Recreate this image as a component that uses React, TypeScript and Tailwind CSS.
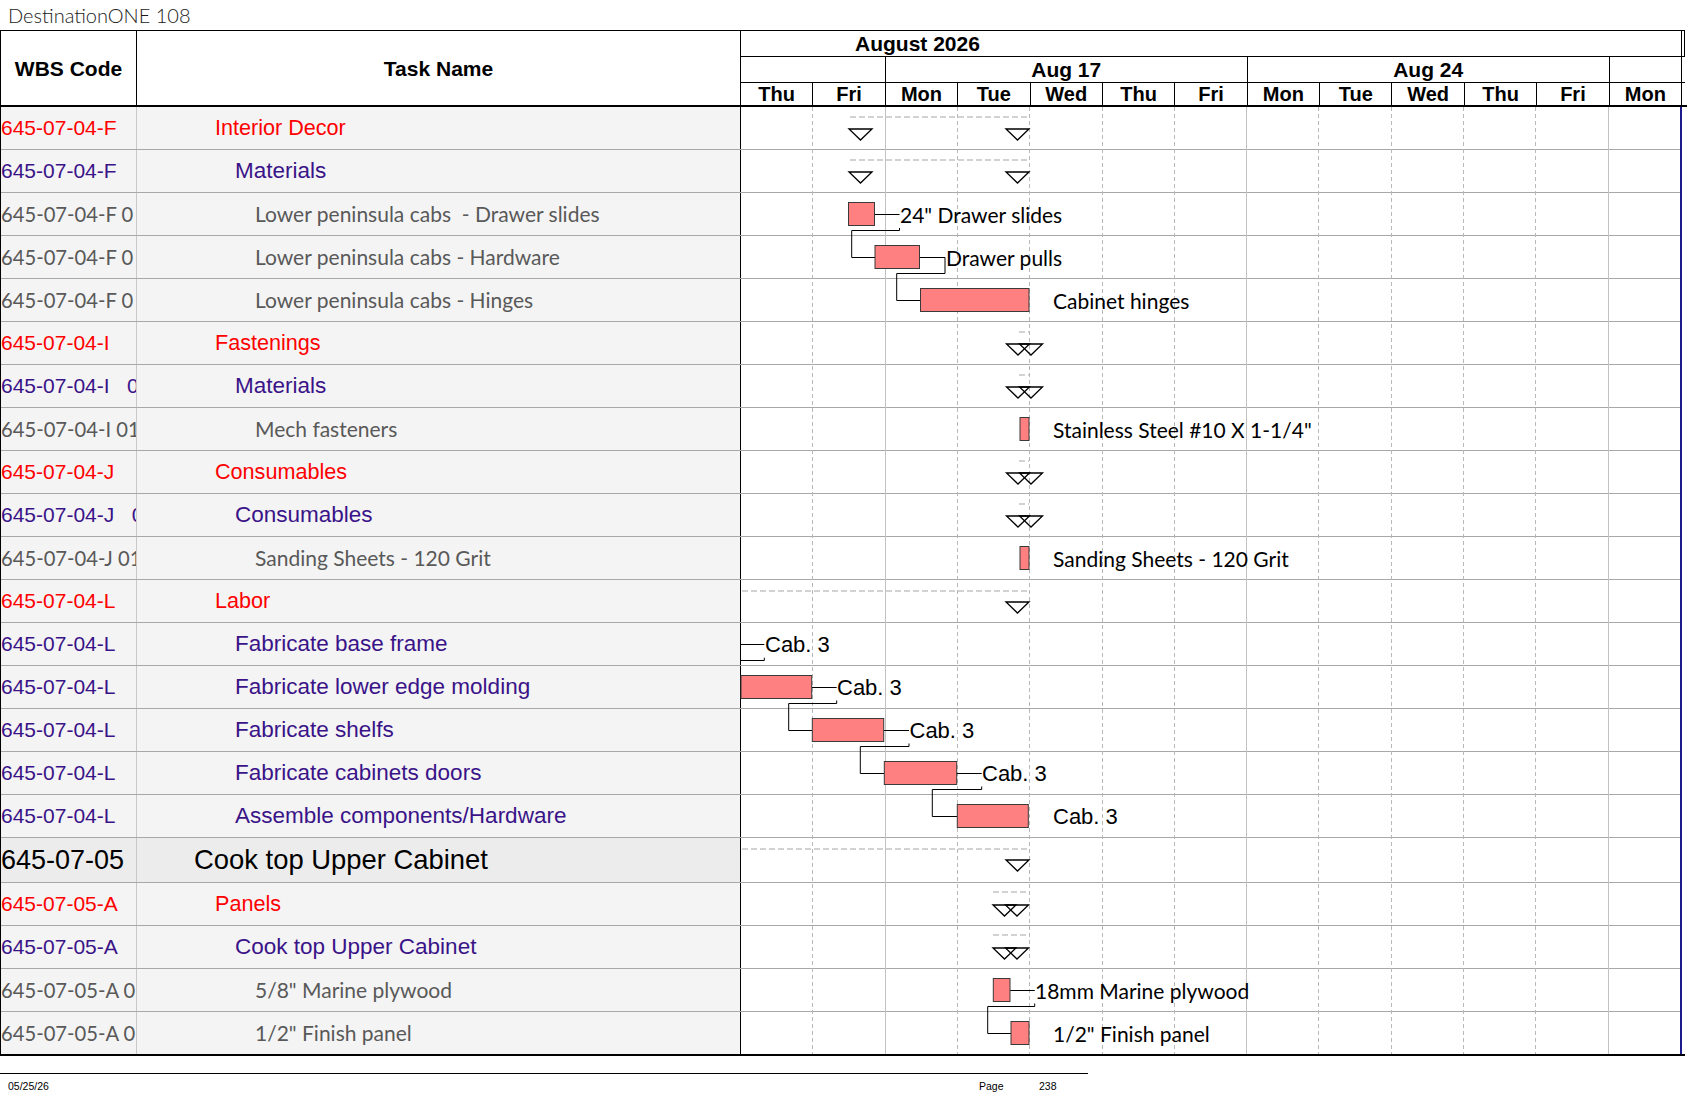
import React from "react";

type Kind = "red" | "purple" | "gray" | "black";
type Row = { code: string; name: string; kind: Kind };

const rows: Row[] = [
  { code: "645-07-04-F", name: "Interior Decor", kind: "red" },
  { code: "645-07-04-F", name: "Materials", kind: "purple" },
  { code: "645-07-04-F 0", name: "Lower peninsula cabs  - Drawer slides", kind: "gray" },
  { code: "645-07-04-F 0", name: "Lower peninsula cabs - Hardware", kind: "gray" },
  { code: "645-07-04-F 0", name: "Lower peninsula cabs - Hinges", kind: "gray" },
  { code: "645-07-04-I", name: "Fastenings", kind: "red" },
  { code: "645-07-04-I   01", name: "Materials", kind: "purple" },
  { code: "645-07-04-I 01", name: "Mech fasteners", kind: "gray" },
  { code: "645-07-04-J", name: "Consumables", kind: "red" },
  { code: "645-07-04-J   01", name: "Consumables", kind: "purple" },
  { code: "645-07-04-J 01", name: "Sanding Sheets - 120 Grit", kind: "gray" },
  { code: "645-07-04-L", name: "Labor", kind: "red" },
  { code: "645-07-04-L", name: "Fabricate base frame", kind: "purple" },
  { code: "645-07-04-L", name: "Fabricate lower edge molding", kind: "purple" },
  { code: "645-07-04-L", name: "Fabricate shelfs", kind: "purple" },
  { code: "645-07-04-L", name: "Fabricate cabinets doors", kind: "purple" },
  { code: "645-07-04-L", name: "Assemble components/Hardware", kind: "purple" },
  { code: "645-07-05", name: "Cook top Upper Cabinet", kind: "black" },
  { code: "645-07-05-A", name: "Panels", kind: "red" },
  { code: "645-07-05-A", name: "Cook top Upper Cabinet", kind: "purple" },
  { code: "645-07-05-A 0", name: "5/8\" Marine plywood", kind: "gray" },
  { code: "645-07-05-A 0", name: "1/2\" Finish panel", kind: "gray" },
];

const arial = "font-['Liberation_Sans',Arial,sans-serif]";
const lato = "font-['Lato',sans-serif]";

const codeCls: Record<Kind, string> = {
  red: `${arial} text-[21px] text-[#ff0000]`,
  purple: `${arial} text-[21px] text-[#3a1388]`,
  gray: `${lato} text-[20.2px] text-[#595959]`,
  black: `${arial} text-[27px] text-black`,
};
const nameCls: Record<Kind, string> = {
  red: `${arial} text-[21.6px] text-[#ff0000] pl-[78px]`,
  purple: `${arial} text-[22.5px] text-[#3a1388] pl-[98px]`,
  gray: `${lato} text-[21px] text-[#595959] pl-[118px]`,
  black: `${arial} text-[27.4px] text-black pl-[57px]`,
};

const dayNames = ["Thu", "Fri", "Mon", "Tue", "Wed", "Thu", "Fri", "Mon", "Tue", "Wed", "Thu", "Fri", "Mon"];

const rowTop = (i: number) => (i <= 17 ? 107 + 43 * i : 883 + 43 * (i - 18));
const rowH = (i: number) => (i === 17 ? 45 : i === 21 ? 42 : 43);

const dayX = (k: number) => 740 + (940 / 13) * k;

const summaries: [number, number, number, number][] = [
  [0, 850, 1028, 10],
  [1, 850, 1028, 10],
  [5, 1019, 1029, 10],
  [6, 1019, 1029, 10],
  [8, 1019, 1029, 10],
  [9, 1019, 1029, 10],
  [11, 742, 1028, 11],
  [17, 742, 1028, 11],
  [18, 993, 1028, 9],
  [19, 993, 1028, 9],
];

const tris: [number, number][] = [
  [0, 860.5], [0, 1017.5],
  [1, 860.5], [1, 1017.5],
  [5, 1018], [5, 1031],
  [6, 1018], [6, 1031],
  [8, 1018], [8, 1031],
  [9, 1018], [9, 1031],
  [11, 1017.5],
  [17, 1017.5],
  [18, 1004.5], [18, 1017],
  [19, 1004.5], [19, 1017],
];

const bars: [number, number, number][] = [
  [2, 848.5, 874.5],
  [3, 875, 919.5],
  [4, 920.5, 1029],
  [7, 1020, 1029],
  [10, 1020, 1029],
  [13, 741, 811.7],
  [14, 812.3, 883.7],
  [15, 884.3, 956.7],
  [16, 957.3, 1028.3],
  [20, 993.3, 1010],
  [21, 1011, 1029],
];

const labels: [number, number, string, "lato" | "arial"][] = [
  [2, 900, "24\" Drawer slides", "lato"],
  [3, 946, "Drawer pulls", "lato"],
  [4, 1053, "Cabinet hinges", "lato"],
  [7, 1053, "Stainless Steel #10 X 1-1/4\"", "lato"],
  [10, 1053, "Sanding Sheets - 120 Grit", "lato"],
  [12, 765, "Cab. 3", "arial"],
  [13, 837, "Cab. 3", "arial"],
  [14, 909.5, "Cab. 3", "arial"],
  [15, 982, "Cab. 3", "arial"],
  [16, 1053, "Cab. 3", "arial"],
  [20, 1035, "18mm Marine plywood", "lato"],
  [21, 1053, "1/2\" Finish panel", "lato"],
];

const leaders: [number, number, number][] = [
  [2, 874.5, 899.5],
  [3, 919.5, 945],
  [12, 741, 764.3],
  [13, 811.7, 836.7],
  [14, 883.7, 909],
  [15, 956.7, 981.7],
  [20, 1010, 1034.7],
];

// [row, xl, tickFrom(offset), xc, nextStart]
const links: [number, number, number, number, number][] = [
  [2, 899.5, 35, 851.7, 875],
  [3, 945, 21.5, 896.7, 920.7],
  [12, 764.3, 34.7, 741, -1],
  [13, 836.7, 34.5, 788.7, 812.3],
  [14, 909, 34.5, 860.3, 884.3],
  [15, 981.7, 34.5, 932.3, 957.3],
  [20, 1034.7, 34.5, 987.7, 1011],
];

function Chart() {
  return (
    <svg className="absolute left-0 top-0 overflow-visible" width={940} height={947} viewBox="0 0 940 947">
      <g transform="translate(-741 -107)">
        {Array.from({ length: 12 }, (_, j) => j + 1).map((k) => {
          const x = Math.round(dayX(k)) + 0.5;
          const solid = k === 2 || k === 7 || k === 12;
          return (
            <line
              key={k}
              x1={x}
              x2={x}
              y1={107}
              y2={1054}
              stroke={solid ? "#c2c2c2" : "#b8b8b8"}
              strokeWidth={1}
              strokeDasharray={solid ? undefined : "4 3"}
            />
          );
        })}
        {summaries.map(([r, x1, x2, off], i) => (
          <line
            key={"s" + i}
            x1={x1}
            x2={x2}
            y1={rowTop(r) + off}
            y2={rowTop(r) + off}
            stroke="#d2d2d2"
            strokeWidth={2}
            strokeDasharray="6 3"
          />
        ))}
        {leaders.map(([r, x1, x2], i) => {
          const y = Math.round(rowTop(r) + 21.3) + 0.5;
          return <line key={"l" + i} x1={x1} x2={x2} y1={y} y2={y} stroke="#000" strokeWidth={1} />;
        })}
        {links.map(([r, xl, tick, xc, next], i) => {
          const t = rowTop(r);
          const yb = Math.round(t + 37.3) + 0.5;
          const yn = Math.round(rowTop(r + 1) + 20.7) + 0.5;
          const d =
            next < 0
              ? `M ${xl} ${t + tick} V ${yb} H ${xc}`
              : `M ${xl} ${t + tick} V ${yb} H ${xc} V ${yn} H ${next}`;
          return <path key={"k" + i} d={d} fill="none" stroke="#000" strokeWidth={1} />;
        })}
        {bars.map(([r, x1, x2], i) => (
          <rect
            key={"b" + i}
            x={x1}
            y={rowTop(r) + 9.5}
            width={x2 - x1}
            height={23}
            fill="#ff8080"
            stroke="#3a3a3a"
            strokeWidth={1}
          />
        ))}
        {tris.map(([r, cx], i) => {
          const t = rowTop(r);
          return (
            <polygon
              key={"t" + i}
              points={`${cx - 11.5},${t + 22} ${cx + 11.5},${t + 22} ${cx},${t + 33}`}
              fill="none"
              stroke="#000"
              strokeWidth={1.3}
              strokeLinejoin="miter"
            />
          );
        })}
        {labels.map(([r, x, text, f], i) => (
          <text
            key={"x" + i}
            x={x}
            y={rowTop(r) + (f === "lato" ? 29.5 : 29)}
            fill="#000"
            className={f === "lato" ? `${lato} text-[21px]` : `${arial} text-[22px]`}
            xmlSpace="preserve"
          >
            {text}
          </text>
        ))}
      </g>
    </svg>
  );
}

export default function App() {
  return (
    <div className="relative w-[1687px] h-[1097px] overflow-hidden bg-white text-black">
      {/* Title */}
      <div className={`h-[30px] pl-[8px] flex items-center ${lato} font-light text-[20px] text-[#1a1a1a]`}>
        DestinationONE 108
      </div>

      {/* Header */}
      <div className="w-[1687px] border-b-2 border-black">
        <div className={`flex w-[1685px] border-t border-l border-black ${arial} font-bold leading-none`}>
          <div className="w-[136px] h-[74px] border-r border-black flex items-center justify-center text-[21px]">
            WBS Code
          </div>
          <div className="w-[604px] h-[74px] border-r border-black flex items-center justify-center text-[21px]">
            Task Name
          </div>
          <div className="w-[941px] flex flex-col">
            <div className="h-[26px] border-b border-r border-black flex items-center pl-[114px] text-[21px]">
              August 2026
            </div>
            <div className="h-[26px] border-b border-black grid grid-cols-[repeat(13,minmax(0,1fr))] grid-rows-[25px] text-[21px]">
              <div className="col-span-2 border-r border-black" />
              <div className="col-span-5 border-r border-black flex items-center justify-center">Aug 17</div>
              <div className="col-span-5 border-r border-black flex items-center justify-center">Aug 24</div>
              <div className="col-span-1 border-r border-black" />
            </div>
            <div className="h-[22px] grid grid-cols-[repeat(13,minmax(0,1fr))] grid-rows-[22px] text-[20px]">
              {dayNames.map((d, i) => (
                <div key={i} className="border-r border-black flex items-center justify-center">
                  {d}
                </div>
              ))}
            </div>
          </div>
          <div className="w-[3px] flex flex-col">
            <div className="h-[26px] border-r border-b border-black" />
            <div className="h-[26px] border-b border-black" />
          </div>
        </div>
      </div>

      {/* Body */}
      <div className="flex w-[1685px] border-b-2 border-black">
        <div className="flex flex-col border-l border-black">
          {rows.map((r, i) => {
            const last = i === rows.length - 1;
            const bg = r.kind === "black" ? "bg-[#ececec]" : "bg-[#f4f4f4]";
            const h = i === 17 ? "h-[45px]" : last ? "h-[42px]" : "h-[43px]";
            return (
              <div key={i} className={`flex w-[740px] ${h} ${bg} ${last ? "" : "border-b border-[#a8a8a8]"}`}>
                <div
                  className={`w-[136px] shrink-0 border-r border-[#c8c8c8] overflow-hidden whitespace-pre flex items-center ${codeCls[r.kind]}`}
                >
                  {r.code}
                </div>
                <div
                  className={`w-[604px] shrink-0 border-r border-black overflow-hidden whitespace-pre flex items-center ${nameCls[r.kind]}`}
                >
                  {r.name}
                </div>
              </div>
            );
          })}
        </div>
        <div className="relative w-[941px] flex flex-col border-r-2 border-[#1a1a8a]">
          {rows.map((_, i) => {
            const last = i === rows.length - 1;
            const h = rowH(i);
            return (
              <div
                key={i}
                className={`w-full ${h === 45 ? "h-[45px]" : h === 42 ? "h-[42px]" : "h-[43px]"} ${
                  last ? "" : "border-b border-[#a8a8a8]"
                }`}
              />
            );
          })}
          <Chart />
        </div>
      </div>

      {/* Footer */}
      <div className="mt-[17px] w-[1088px] border-t border-black">
        <div className={`relative h-[24px] ${arial} text-[10.5px] text-black`}>
          <span className="absolute left-[8px] top-[5px]">05/25/26</span>
          <span className="absolute left-[979px] top-[5px]">Page</span>
          <span className="absolute left-[1039px] top-[5px]">238</span>
        </div>
      </div>
    </div>
  );
}
